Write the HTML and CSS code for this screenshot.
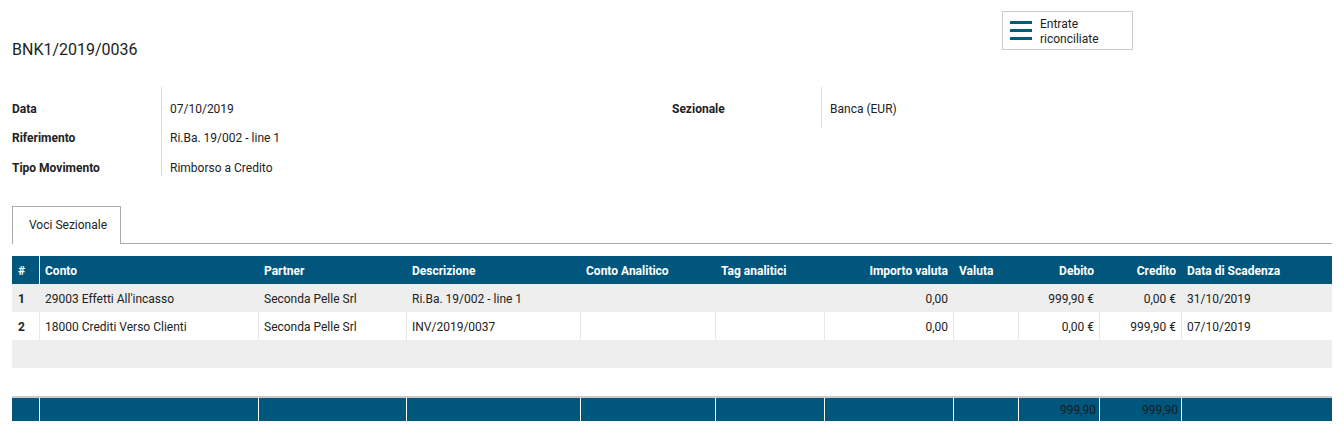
FILE: index.html
```html
<!DOCTYPE html>
<html lang="it">
<head>
<meta charset="utf-8">
<title>BNK1/2019/0036</title>
<link rel="stylesheet" href="styles.css">
</head>
<body>
<div class="page">
  <div class="top">
    <h1 class="title">BNK1/2019/0036</h1>
    <button class="stat-btn" type="button">
      <svg viewBox="0 0 22 19" aria-hidden="true"><rect x="0" y="0" width="22" height="3"/><rect x="0" y="8" width="22" height="3"/><rect x="0" y="16" width="22" height="3"/></svg>
      <span class="stat-text">Entrate<br>riconciliate</span>
    </button>
  </div>

  <div class="groups">
    <div class="group">
      <div class="lbl r1">Data</div><div class="val r1">07/10/2019</div>
      <div class="lbl">Riferimento</div><div class="val">Ri.Ba. 19/002 - line 1</div>
      <div class="lbl r3">Tipo Movimento</div><div class="val r3">Rimborso a Credito</div>
    </div>
    <div class="group">
      <div class="lbl single">Sezionale</div><div class="val single">Banca (EUR)</div>
    </div>
  </div>

  <div class="tabs">
    <div class="tab">Voci Sezionale</div>
  </div>

  <table class="lines">
    <colgroup>
      <col class="w-num"><col class="w-conto"><col class="w-partner"><col class="w-desc"><col class="w-an"><col class="w-tag"><col class="w-imp"><col class="w-val"><col class="w-deb"><col class="w-cred"><col class="w-date">
    </colgroup>
    <thead>
      <tr>
        <th class="num">#</th>
        <th class="sep">Conto</th>
        <th>Partner</th>
        <th>Descrizione</th>
        <th>Conto Analitico</th>
        <th>Tag analitici</th>
        <th class="r">Importo valuta</th>
        <th>Valuta</th>
        <th class="r">Debito</th>
        <th class="r">Credito</th>
        <th>Data di Scadenza</th>
      </tr>
    </thead>
    <tbody>
      <tr class="odd">
        <td class="num">1</td>
        <td>29003 Effetti All'incasso</td>
        <td>Seconda Pelle Srl</td>
        <td>Ri.Ba. 19/002 - line 1</td>
        <td></td>
        <td></td>
        <td class="r">0,00</td>
        <td></td>
        <td class="r">999,90 €</td>
        <td class="r">0,00 €</td>
        <td>31/10/2019</td>
      </tr>
      <tr>
        <td class="num">2</td>
        <td>18000 Crediti Verso Clienti</td>
        <td>Seconda Pelle Srl</td>
        <td>INV/2019/0037</td>
        <td></td>
        <td></td>
        <td class="r">0,00</td>
        <td></td>
        <td class="r">0,00 €</td>
        <td class="r">999,90 €</td>
        <td>07/10/2019</td>
      </tr>
      <tr class="odd empty"><td colspan="11"></td></tr>
      <tr class="empty last"><td colspan="11"></td></tr>
    </tbody>
    <tfoot>
      <tr>
        <td class="num"></td>
        <td></td>
        <td></td>
        <td></td>
        <td></td>
        <td></td>
        <td></td>
        <td></td>
        <td class="r">999,90</td>
        <td class="r">999,90</td>
        <td></td>
      </tr>
    </tfoot>
  </table>
</div>
</body>
</html>
```

FILE: styles.css
```css
body {
  margin: 0;
  background: #fff;
  color: #222;
  font-family: Roboto, "Noto Sans", Arial, sans-serif;
  font-size: 12px;
}

.page {
  padding: 0 12px;
}

.top {
  display: flex;
  align-items: flex-start;
  padding-right: 199px;
}

.title {
  flex: 1;
  margin: 0;
  padding-top: 40px;
  font-size: 16px;
  font-weight: 400;
  line-height: 20px;
}

.stat-btn {
  margin-top: 11px;
  width: 131px;
  height: 39px;
  box-sizing: border-box;
  border: 1px solid #ccc;
  border-radius: 0;
  background: #fff;
  display: flex;
  align-items: center;
  gap: 8px;
  padding: 0 0 0 7px;
  font: inherit;
  color: #222;
  text-align: left;
}

.stat-btn svg {
  flex: none;
  width: 22px;
  height: 19px;
  fill: #005a80;
}

.stat-text {
  line-height: 15px;
  padding-top: 2px;
}

.groups {
  display: grid;
  grid-template-columns: 1fr 1fr;
  margin-top: 27px;
}

.group {
  display: grid;
  grid-template-columns: 149px 1fr;
  align-content: start;
}

.lbl {
  font-weight: 700;
  padding-top: 14px;
  line-height: 15px;
}

.val {
  border-left: 1px solid #ddd;
  padding: 14px 0 0 8px;
  line-height: 15px;
}

.group .r1,
.group .r3 {
  padding-top: 15px;
}

.group .single {
  padding-top: 15px;
  padding-bottom: 11px;
}

.tabs {
  display: flex;
  margin-top: 30px;
  border-bottom: 1px solid #aaa;
}

.tab {
  border: 1px solid #aaa;
  border-bottom: none;
  background: #fff;
  padding: 11px 13px 11px 16px;
  margin-bottom: -1px;
  line-height: 15px;
}

.lines {
  width: 100%;
  margin-top: 12px;
  table-layout: fixed;
  border-collapse: separate;
  border-spacing: 0;
}

.w-num { width: 27px; }
.w-conto { width: 219px; }
.w-partner { width: 148px; }
.w-desc { width: 174px; }
.w-an { width: 135px; }
.w-tag { width: 109px; }
.w-imp { width: 129px; }
.w-val { width: 65px; }
.w-deb { width: 81px; }
.w-cred { width: 82px; }
.w-date { width: 151px; }

.lines th,
.lines td {
  padding: 2px 5px 0;
  line-height: 15px;
  text-align: left;
  vertical-align: middle;
  white-space: nowrap;
  overflow: hidden;
  border-left: 1px solid transparent;
}

.lines th.num,
.lines td.num {
  border-left: none;
  padding-left: 6px;
  font-weight: 700;
}

.lines th {
  height: 26px;
  background: #00567d;
  color: #fff;
  font-weight: 700;
  border-left-color: #00567d;
}

.lines th.sep {
  border-left-color: #fff;
}

.lines tbody td {
  height: 26px;
  border-left-color: #e6e6e6;
}

.lines tbody tr.odd td {
  background: #eee;
  border-left-color: #eee;
}

.lines tbody tr.empty td {
  border-left: none;
  padding: 0;
  height: 28px;
}

.lines tbody tr.last td {
  border-bottom: 2px solid #ccc;
}

.lines tfoot td {
  height: 21px;
  background: #00567d;
  color: #1c1c1c;
  border-left-color: #fff;
  padding-right: 3px;
}

.lines .r {
  text-align: right;
}
```
